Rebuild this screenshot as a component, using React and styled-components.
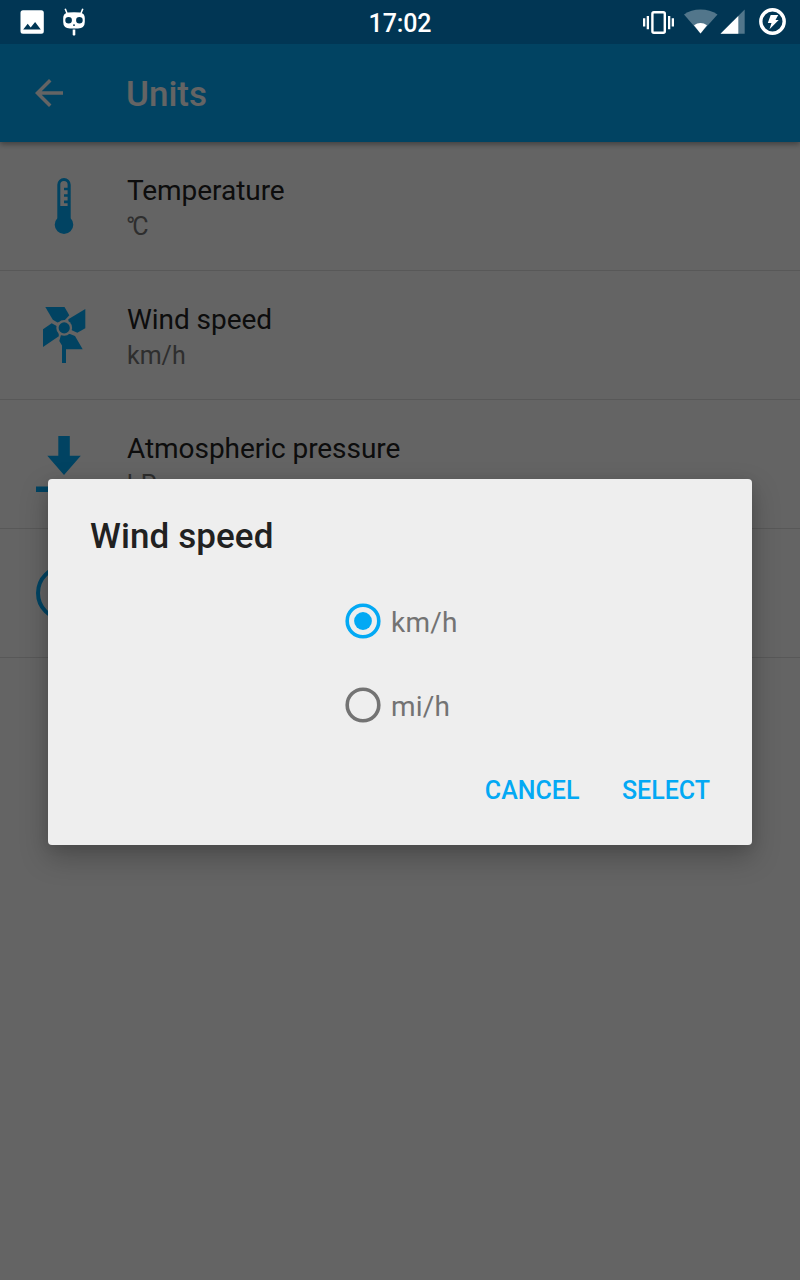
import React from "react";
import styled, { createGlobalStyle } from "styled-components";

const GlobalStyle = createGlobalStyle`
  *, *::before, *::after { box-sizing: border-box; }
  body {
    margin: 0;
    background: #fafafa;
    font-family: Roboto, "Noto Sans", sans-serif;
  }
`;

const Screen = styled.div`
  position: relative;
  width: 800px;
  height: 1280px;
  overflow: hidden;
  background: #fafafa;
  display: flex;
  flex-direction: column;
`;

const StatusBar = styled.header`
  position: relative;
  z-index: 2;
  height: 44px;
  flex: none;
  display: grid;
  grid-template-columns: 1fr auto 1fr;
  grid-template-rows: 44px;
  align-items: start;
  background: #013654;
  color: #fff;
`;

const StatusGroup = styled.div`
  height: 44px;
  display: flex;
  justify-content: ${(p) => (p.$end ? "flex-end" : "flex-start")};
`;

const Clock = styled.time`
  font-size: 25px;
  font-weight: 500;
  line-height: 41px;
  padding-top: 3px;
  letter-spacing: -0.1px;
`;

const AppBar = styled.div`
  position: relative;
  flex: none;
  height: 98px;
  display: flex;
  align-items: center;
  background: #03a9f4;
  color: #fafafa;
  box-shadow: 0 2px 6px rgba(0, 0, 0, 0.4);
`;

const BackButton = styled.button`
  width: 126px;
  height: 98px;
  padding: 0 0 0 28px;
  border: 0;
  background: none;
  color: inherit;
  text-align: left;
  svg { display: block; }
`;

const AppTitle = styled.h1`
  margin: 0;
  font-size: 35px;
  font-weight: 500;
  line-height: 42px;
  padding-top: 4px;
`;

const List = styled.ul`
  list-style: none;
  margin: 0;
  padding: 0;
`;

const Row = styled.li`
  height: 129px;
  display: flex;
  border-bottom: 1px solid #dcdcdc;
`;

const RowIcon = styled.span`
  width: 127px;
  flex: none;
  padding: 36px 0 0 36px;
  color: #03a9f4;
  svg { display: block; }
`;

const RowText = styled.div`
  padding-top: 31px;
`;

const Label = styled.div`
  font-size: 28px;
  line-height: 36px;
  letter-spacing: -0.05px;
  color: #212121;
`;

const Value = styled.div`
  font-size: 25px;
  line-height: 36px;
  letter-spacing: ${(p) => (p.$tight ? "-3px" : "0")};
  margin-left: ${(p) => (p.$tight ? "-1px" : "0")};
  color: #737373;
`;

const Scrim = styled.div`
  position: absolute;
  inset: 0;
  z-index: 1;
  background: rgba(0, 0, 0, 0.6);
  display: flex;
  align-items: flex-start;
  justify-content: center;
  padding-top: 479px;
`;

const Dialog = styled.section`
  width: 704px;
  height: 366px;
  border-radius: 4px;
  background: #eee;
  box-shadow: 0 12px 28px rgba(0, 0, 0, 0.25), 0 2px 12px rgba(0, 0, 0, 0.08);
  display: flex;
  flex-direction: column;
`;

const DialogTitle = styled.h2`
  margin: 0;
  padding: 37px 42px 0;
  font-size: 35px;
  font-weight: 500;
  line-height: 42px;
  letter-spacing: 0.1px;
  color: #212121;
`;

const Options = styled.div`
  width: 112px;
  margin: 21px auto 0 297px;
  display: flex;
  flex-direction: column;
`;

const Option = styled.label`
  height: 84px;
  display: flex;
  align-items: center;
  gap: 10px;
  font-size: 28px;
  line-height: 36px;
  color: #737373;
  white-space: nowrap;
`;

const OptionText = styled.span`
  padding-top: 3px;
  letter-spacing: 0.2px;
`;

const RadioMark = styled.svg`
  width: 36px;
  height: 36px;
  flex: none;
  color: ${(p) => (p.$checked ? "#03a9f4" : "#737373")};
`;

const Actions = styled.div`
  display: flex;
  justify-content: flex-end;
  gap: 42.5px;
  padding: 26px 42px 0;
`;

const Action = styled.button`
  border: 0;
  padding: 0;
  background: none;
  font: 500 25px/36px Roboto, sans-serif;
  color: #03a9f4;
`;

const PictureAndBot = () => (
  <svg width="100" height="44" viewBox="0 0 100 44" fill="#fff">
    <path fillRule="evenodd" d="M23 10.3h18.3a2.5 2.5 0 0 1 2.5 2.5v18.5a2.5 2.5 0 0 1-2.5 2.5H23a2.5 2.5 0 0 1-2.5-2.5V12.8a2.5 2.5 0 0 1 2.5-2.5zM23.2 29.5h17.6l-5.7-7.5-4.4 5.4-3-3.7z" />
    <path d="M65.2 8.8 67.2 13.8M82.8 8.8 80.8 13.8" stroke="#fff" strokeWidth="1.6" />
    <path fillRule="evenodd" d="M68 12.6Q74 11.9 80 12.6Q84.8 13.6 84.8 18V22Q84.8 28.3 78 28.5H70Q63.2 28.3 63.2 22V18Q63.2 13.6 68 12.6zM68.6 16.9a3.3 3.3 0 1 0 0 6.6a3.3 3.3 0 1 0 0-6.6zM79.4 16.9a3.3 3.3 0 1 0 0 6.6a3.3 3.3 0 1 0 0-6.6zM73 24.6v1.2h2v-1.2z" />
    <path d="M72.7 29.5h2.6v5.5l-1.3.8-1.3-.8z" />
  </svg>
);

const SystemIcons = () => (
  <svg width="170" height="44" viewBox="0 0 170 44" fill="#fff">
    <rect x="22.4" y="12.2" width="12.4" height="20.5" rx="1.5" fill="none" stroke="#fff" strokeWidth="2.4" />
    <path d="M13 18.3h2.3v8.3H13zM16.7 16h2.3v13.2h-2.3zM38 16h2.3v13.2H38zM41.7 18.3H44v8.3h-2.3z" />
    <path opacity=".32" d="M70.5 33.5 54 14.5Q61 9.5 70.5 9.5T87.5 14.5z" />
    <path d="M70.5 33.5 64 25.3Q67 23 70.5 23T77 25.3z" />
    <path opacity=".32" d="M90.5 33.8 114.7 9.4V33.8z" />
    <path d="M90.5 33.8 108.3 16V33.8z" />
    <circle cx="142.5" cy="21.5" r="11.7" fill="none" stroke="#fff" strokeWidth="3.4" />
    <path d="M140.7 15h7.5l-2.7 4.9h3.2L139.5 29.3l2-6.3h-3.7z" />
  </svg>
);

const BackArrow = () => (
  <svg width="42" height="42" viewBox="0 0 24 24" fill="currentColor">
    <path d="M20 11H7.83l5.59-5.59L12 4l-8 8 8 8 1.41-1.41L7.83 13H20v-2z" />
  </svg>
);

const Radio = ({ checked }) => (
  <RadioMark viewBox="0 0 36 36" $checked={checked}>
    <circle cx="18" cy="18" r="15.8" fill="none" stroke="currentColor" strokeWidth="3.6" />
    {checked && <circle cx="18" cy="18" r="8.9" fill="currentColor" />}
  </RadioMark>
);

const Icon56 = ({ children }) => (
  <svg width="56" height="56" viewBox="0 0 56 56" fill="currentColor">
    {children}
  </svg>
);

const Thermometer = () => (
  <Icon56>
    <path
      fillRule="evenodd"
      d="M21.3 6.7a6.7 6.7 0 0 1 13.4 0V40.2a9.3 9.3 0 1 1-13.4 0zM24.3 6.6V28h7.3v-2.8H28v-2.6h3.6v-3.8H28v-2.6h3.6v-3.9H28V9.7h3.6V6.6a3.65 3.65 0 0 0-7.3 0z"
    />
  </Icon56>
);

const Pinwheel = () => (
  <Icon56>
    <mask id="hub">
      <rect width="56" height="56" fill="#fff" />
      <circle cx="28.2" cy="20.9" r="7.9" fill="#000" />
    </mask>
    <g mask="url(#hub)">
      <path d="M9.3 0H28.5L33.3 8.2 27 15 21.5 15.5 16.8 12.8z" />
      <path d="M49.3 2V21.3L41.3 25.7 33 22 32.3 12.3z" />
      <path d="M7 22.3 15.7 16.3 22.5 20 22.8 29.2 7 40z" />
      <path d="M23.3 34 25.5 26 34 27 39 29 46.7 42.3H30V56H26V38.5z" />
    </g>
    <circle cx="28.2" cy="20.9" r="5.6" />
  </Icon56>
);

const Pressure = () => (
  <Icon56>
    <path d="M22.3 0h11.5v19.7h11L28 39 11.3 19.7h11zM0 50.4h56V56H0z" />
  </Icon56>
);

const ClockFace = () => (
  <Icon56>
    <circle cx="28" cy="28" r="26" fill="none" stroke="currentColor" strokeWidth="4" />
    <path d="M28 12v17l11 7" fill="none" stroke="currentColor" strokeWidth="4" />
  </Icon56>
);

const settings = [
  { label: "Temperature", value: "°C", tight: true, icon: <Thermometer /> },
  { label: "Wind speed", value: "km/h", icon: <Pinwheel /> },
  { label: "Atmospheric pressure", value: "hPa", icon: <Pressure /> },
  { label: "", value: "", icon: <ClockFace /> },
];

export default function App() {
  return (
    <>
      <GlobalStyle />
      <Screen>
        <StatusBar>
          <StatusGroup><PictureAndBot /></StatusGroup>
          <Clock>17:02</Clock>
          <StatusGroup $end><SystemIcons /></StatusGroup>
        </StatusBar>
        <AppBar>
          <BackButton aria-label="Back"><BackArrow /></BackButton>
          <AppTitle>Units</AppTitle>
        </AppBar>
        <List>
          {settings.map((s, i) => (
            <Row key={i}>
              <RowIcon>{s.icon}</RowIcon>
              <RowText>
                <Label>{s.label}</Label>
                <Value $tight={s.tight}>{s.value}</Value>
              </RowText>
            </Row>
          ))}
        </List>
        <Scrim>
          <Dialog role="dialog" aria-label="Wind speed">
            <DialogTitle>Wind speed</DialogTitle>
            <Options role="radiogroup">
              <Option><Radio checked /><OptionText>km/h</OptionText></Option>
              <Option><Radio /><OptionText>mi/h</OptionText></Option>
            </Options>
            <Actions>
              <Action>CANCEL</Action>
              <Action>SELECT</Action>
            </Actions>
          </Dialog>
        </Scrim>
      </Screen>
    </>
  );
}
